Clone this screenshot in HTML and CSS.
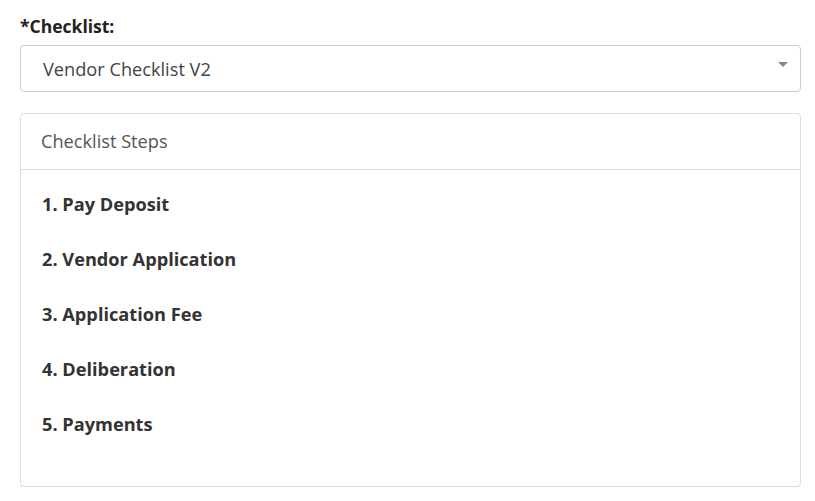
FILE: index.html
```html
<!DOCTYPE html>
<html>
<head>
<meta charset="utf-8">
<link rel="stylesheet" href="styles.css">
</head>
<body>
<div class="form">
  <label class="label">*Checklist:</label>
  <div class="select">
    <span class="select-text">Vendor Checklist V2</span>
    <span class="caret"></span>
  </div>
  <div class="card">
    <div class="card-header">Checklist Steps</div>
    <ol class="steps">
      <li>1. Pay Deposit</li>
      <li>2. Vendor Application</li>
      <li>3. Application Fee</li>
      <li>4. Deliberation</li>
      <li>5. Payments</li>
    </ol>
  </div>
</div>
</body>
</html>
```
FILE: styles.css
```css
html, body {
  margin: 0;
  padding: 0;
  background: #fff;
}
body {
  font-family: "Open Sans", "Noto Sans", sans-serif;
  color: #333;
}
.form {
  padding: 15px 14px 0 20px;
  display: flex;
  flex-direction: column;
}
.label {
  font-weight: 700;
  font-size: 17.5px;
  line-height: 22px;
  color: #222;
  margin-bottom: 8px;
}
.select {
  height: 47px;
  box-sizing: border-box;
  border: 1px solid #ccc;
  border-radius: 4px;
  display: flex;
  align-items: center;
  justify-content: space-between;
  padding: 0 12px 0 22px;
}
.select-text {
  font-size: 18.2px;
  color: #444;
}
.caret {
  width: 0;
  height: 0;
  border-left: 5px solid transparent;
  border-right: 5px solid transparent;
  border-top: 5px solid #888;
  margin-top: -9px;
}
.card {
  margin-top: 21px;
  height: 374px;
  box-sizing: border-box;
  border: 1px solid #ddd;
  border-radius: 4px;
  box-shadow: 0 1px 1px rgba(0,0,0,0.05);
}
.card-header {
  height: 56px;
  box-sizing: border-box;
  border-bottom: 1px solid #ddd;
  display: flex;
  align-items: center;
  padding: 0 20px 2px 20px;
  font-size: 18.2px;
  color: #555;
}
.steps {
  list-style: none;
  margin: 0;
  padding: 6px 20px 0 21px;
}
.steps li {
  height: 55px;
  display: flex;
  align-items: center;
  font-weight: 700;
  font-size: 18.2px;
  color: #333;
}
```
